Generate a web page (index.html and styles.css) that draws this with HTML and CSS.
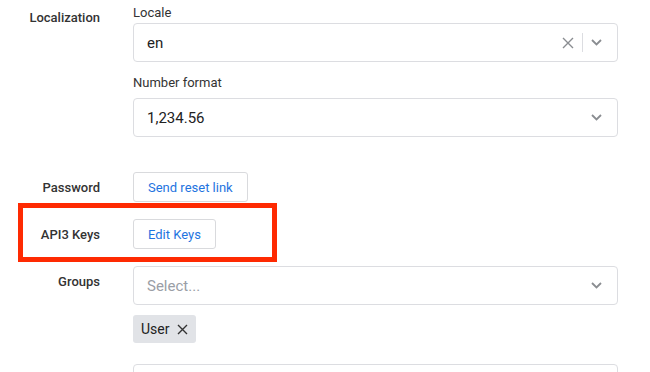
FILE: index.html
```html
<!DOCTYPE html>
<html>
<head>
<meta charset="utf-8">
<link rel="stylesheet" href="styles.css">
</head>
<body>
<div class="page">
  <div class="row row-loc">
    <div class="label">Localization</div>
    <div class="field">
      <div class="field-label first">Locale</div>
      <div class="select">
        <span class="value">en</span>
        <span class="indicators">
          <svg class="clear" width="12" height="12" viewBox="0 0 12 12"><path d="M1 1L11 11M11 1L1 11" stroke="#8a8d91" stroke-width="1.4" fill="none"/></svg>
          <span class="sep"></span>
          <svg class="chev" width="11" height="7" viewBox="0 0 11 7"><path d="M1 1L5.5 5.5L10 1" stroke="#8a8d91" stroke-width="1.8" fill="none"/></svg>
        </span>
      </div>
      <div class="field-label second">Number format</div>
      <div class="select">
        <span class="value">1,234.56</span>
        <span class="indicators">
          <svg class="chev" width="11" height="7" viewBox="0 0 11 7"><path d="M1 1L5.5 5.5L10 1" stroke="#8a8d91" stroke-width="1.8" fill="none"/></svg>
        </span>
      </div>
    </div>
  </div>

  <div class="row">
    <div class="label">Password</div>
    <div class="field"><button class="btn">Send reset link</button></div>
  </div>

  <div class="row row-api">
    <div class="highlight"></div>
    <div class="label">API3 Keys</div>
    <div class="field"><button class="btn">Edit Keys</button></div>
  </div>

  <div class="row">
    <div class="label">Groups</div>
    <div class="field">
      <div class="select">
        <span class="value placeholder">Select...</span>
        <span class="indicators">
          <svg class="chev" width="11" height="7" viewBox="0 0 11 7"><path d="M1 1L5.5 5.5L10 1" stroke="#8a8d91" stroke-width="1.8" fill="none"/></svg>
        </span>
      </div>
      <div class="tags">
        <span class="tag">User
          <svg width="11" height="11" viewBox="0 0 11 11"><path d="M1 1L10 10M10 1L1 10" stroke="#333" stroke-width="1.4" fill="none"/></svg>
        </span>
      </div>
    </div>
  </div>

  <div class="row row-next">
    <div class="label"></div>
    <div class="field"><div class="select"></div></div>
  </div>
</div>
</body>
</html>
```

FILE: styles.css
```css
html, body {
  margin: 0;
  padding: 0;
  background: #fff;
}
body {
  font-family: Roboto, "Liberation Sans", sans-serif;
  color: #333;
  overflow: hidden;
}
.page {
  padding-top: 2px;
  display: flex;
  flex-direction: column;
  gap: 17px;
  width: 618px;
}
.row {
  display: flex;
  align-items: flex-start;
  column-gap: 33px;
}
.row-loc {
  margin-bottom: 18px;
}
.row-api {
  position: relative;
}
.row-next {
  margin-top: 4px;
}
.label {
  width: 100px;
  flex: none;
  text-align: right;
  font-size: 13px;
  font-weight: 500;
  line-height: 16px;
  padding-top: 8px;
  color: #333;
}
.row-loc .label {
  padding-top: 8px;
}
.field {
  width: 485px;
  flex: none;
}
.field-label {
  font-size: 13px;
  line-height: 16px;
  color: #333;
}
.field-label.first {
  margin-top: 3px;
  margin-bottom: 2px;
}
.field-label.second {
  margin-top: 13px;
  margin-bottom: 7px;
}
.select {
  height: 39px;
  box-sizing: border-box;
  border: 1px solid #dcdde1;
  border-radius: 4px;
  display: flex;
  align-items: center;
  padding-left: 13px;
  padding-right: 15px;
}
.value {
  flex: 1;
  font-size: 15px;
  color: #222;
}
.placeholder {
  color: #9a9ea6;
}
.indicators {
  display: flex;
  align-items: center;
}
.clear {
  display: block;
  margin-right: 8px;
}
.sep {
  width: 1px;
  height: 19px;
  background: #dcdde1;
  margin-right: 8px;
}
.chev {
  display: block;
}
.btn {
  height: 30px;
  box-sizing: border-box;
  border: 1px solid #d9dadd;
  border-radius: 3px;
  background: #fff;
  padding: 0 14px;
  font-family: Roboto, "Liberation Sans", sans-serif;
  font-size: 13px;
  color: #1f74e0;
  cursor: pointer;
}
.tags {
  margin-top: 10px;
  display: flex;
}
.tag {
  display: inline-flex;
  align-items: center;
  gap: 8px;
  height: 28px;
  box-sizing: border-box;
  padding: 0 8px 0 8px;
  background: #e1e3e7;
  border-radius: 3px;
  font-size: 14px;
  color: #222;
}
.highlight {
  position: absolute;
  left: 18px;
  top: -16px;
  width: 259px;
  height: 59px;
  box-sizing: border-box;
  border: 5px solid #fe2a02;
  pointer-events: none;
}
```
